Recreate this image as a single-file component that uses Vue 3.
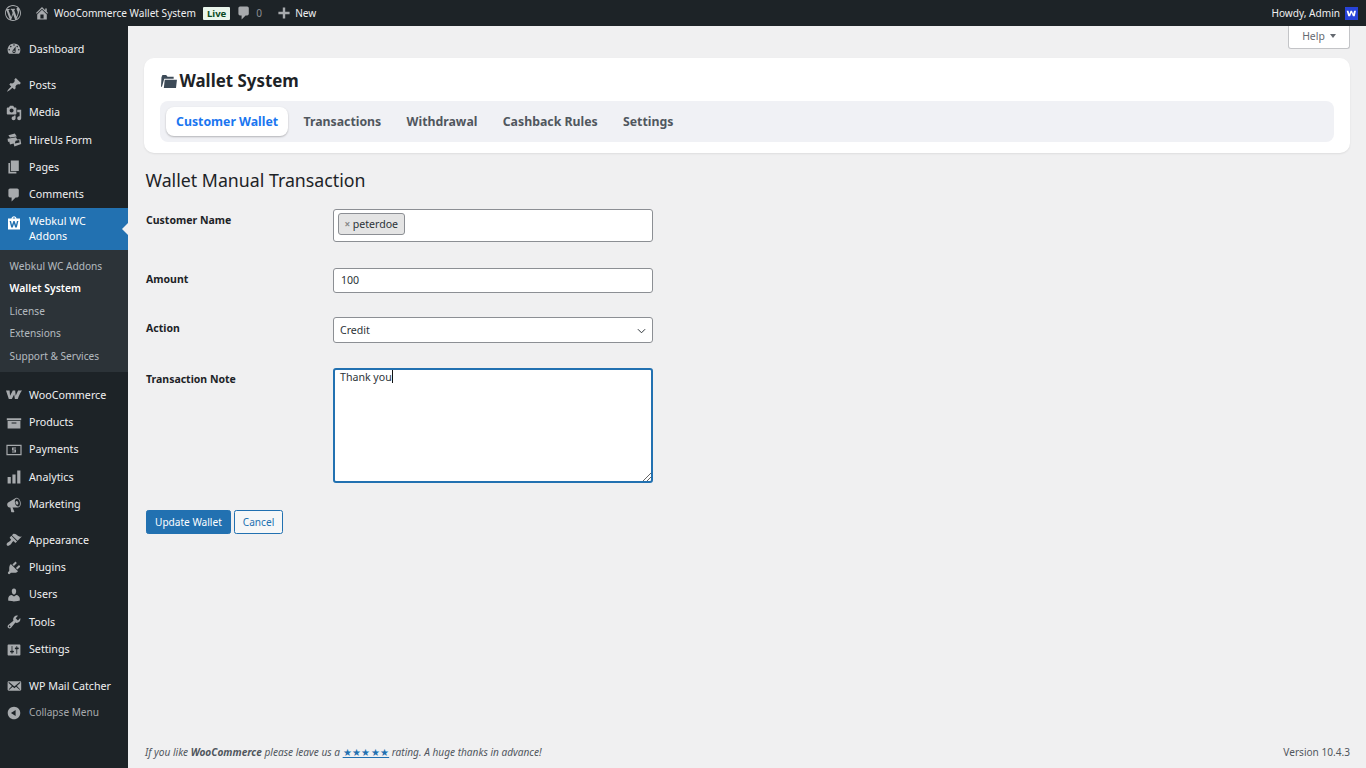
<script setup>
const P = {
  dashboard: 'M3.76 16h12.48c1.1-1.37 1.76-3.11 1.76-5 0-4.42-3.58-8-8-8s-8 3.58-8 8c0 1.89.66 3.63 1.76 5zM10 4c.55 0 1 .45 1 1s-.45 1-1 1-1-.45-1-1 .45-1 1-1zM6 6c.55 0 1 .45 1 1s-.45 1-1 1-1-.45-1-1 .45-1 1-1zm8 0c.55 0 1 .45 1 1s-.45 1-1 1-1-.45-1-1 .45-1 1-1zm-5.37 5.55L12 7v6c0 1.1-.9 2-2 2s-2-.9-2-2c0-.57.24-1.08.63-1.45zM4 10c.55 0 1 .45 1 1s-.45 1-1 1-1-.45-1-1 .45-1 1-1zm12 0c.55 0 1 .45 1 1s-.45 1-1 1-1-.45-1-1 .45-1 1-1zm-5 3c0-.55-.45-1-1-1s-1 .45-1 1 .45 1 1 1 1-.45 1-1z',
  post: 'M10.44 3.02l1.82-1.82 6.36 6.35-1.83 1.82c-1.05-.68-2.48-.57-3.41.36l-.75.75c-.92.93-1.04 2.35-.35 3.41l-1.83 1.82-2.41-2.41-2.8 2.79c-.42.42-3.38 2.71-3.8 2.29s1.86-3.39 2.28-3.81l2.79-2.79L4.1 9.36l1.83-1.82c1.05.69 2.48.57 3.4-.36l.75-.75c.93-.92 1.05-2.35.36-3.41z',
  media: 'M13 11V4c0-.55-.45-1-1-1h-1.67L9 1H5L3.67 3H2c-.55 0-1 .45-1 1v7c0 .55.45 1 1 1h10c.55 0 1-.45 1-1zM7 4.5c1.38 0 2.5 1.12 2.5 2.5S8.38 9.5 7 9.5 4.5 8.38 4.5 7 5.62 4.5 7 4.5zM14 6h5v10.5c0 1.38-1.12 2.5-2.5 2.5S14 17.88 14 16.5s1.12-2.5 2.5-2.5c.17 0 .34.02.5.05V9h-3V6zm-4 8.05V13h2v3.5c0 1.38-1.12 2.5-2.5 2.5S7 17.88 7 16.5 8.12 14 9.5 14c.17 0 .34.02.5.05z',
  form: 'M3 4l8-2 2.500 3.500L5 7zM2 8.500 12.500 6.500l1.500 3 4-.5 1 6-8.500 3-1-3.500-4.500 1-1-3.500-1.500.5zM12 11l-1 3.500 6-1.500-.5-3z',
  page: 'M6 15V2h10v13H6zm-1 1h8v2H3V5h2v11z',
  comment: 'M5 2h9c1.1 0 2 .9 2 2v7c0 1.1-.9 2-2 2h-2l-5 5v-5H5c-1.1 0-2-.9-2-2V4c0-1.1.9-2 2-2z',
  woo: 'M0 4.500h4.500l.6 6.500L8.500 4.500h3l.6 6.500 3-6.500h4.900c-1.800 1.800-3.500 6.200-5.300 10.500h-3.600l-.9-5.500L7.300 15H3.500z',
  box: 'M19 4v2.500H1V4h18zM2 7.500h16V17H2V7.500zM13 10.500V9.300H7v1.200h6z',
  pay: 'M.5 3.500h19v13H.5zM2 5v10h16V5zM7.500 6.800h5v1.400H9.200v1.100h3.300v3.900h-5v-1.400h3.300v-1.100H7.500z',
  chart: 'M18 18V2h-4v16h4zm-6 0V7H8v11h4zm-6 0v-8H2v8h4z',
  mega: 'M18.150 5.940c.46 1.620.38 3.220-.02 4.480-.42 1.280-1.260 2.180-2.300 2.480-.16.06-.26.06-.4.06-.06.02-.12.02-.18.02-.06.02-.14.02-.22.02H8.200l2.220 5.500c.02.14-.06.26-.14.34-.08.1-.24.16-.34.16H6.950c-.1 0-.26-.06-.34-.16-.08-.08-.16-.2-.14-.34l-1-5.500H4.250c-.5.06-1.080-.18-1.540-.62s-.88-1.080-1.060-1.880c-.24-.8-.2-1.560-.02-2.200.18-.62.58-1.080 1.060-1.300l9-5.400c.1-.06.18-.1.24-.16.06-.04.14-.08.24-.12.16-.08.28-.12.5-.18 1.040-.3 2.240.1 3.220 1 .98.88 1.840 2.240 2.260 3.860zm-2.580 5.980c.4-.1.74-.34 1.040-.7.58-.7.86-1.760.86-3.040-.02-.64-.1-1.300-.28-1.980-.34-1.360-1.020-2.500-1.780-3.240s-1.680-1.100-2.460-.88c-.82.22-1.400.96-1.700 2-.32 1.040-.28 2.360.06 3.720.38 1.360 1 2.500 1.800 3.240.78.74 1.620 1.100 2.480.88zM13 5c1.200-.4 2.300 1.300 2.400 2.700.1 1-.4 1.900-1 2.100-1 .3-2.200-1.100-2.500-2.500C11.600 6.200 12.200 5.200 13 5z',
  brush: 'M14.480 11.060L7.410 3.990l1.500-1.500c.5-.56 2.300-.47 3.510.32 1.210.8 1.430 1.280 2.910 2.100 1.180.64 2.450 1.260 4.450.85zm-.71.71L6.700 4.700 4.930 6.470c-.39.39-.39 1.020 0 1.410l1.060 1.060c.39.39.39 1.030 0 1.420-.6.6-1.430 1.110-2.210 1.690-.35.26-.7.53-1.010.84C1.430 13.230 0 15.490 1.260 16.740s3.510-.17 4.850-1.510c.31-.31.58-.66.85-1.020.57-.78 1.080-1.610 1.690-2.210.39-.39 1.020-.39 1.410 0l1.060 1.060c.39.39 1.020.39 1.410 0z',
  plug: 'M13.110 4.360L9.870 7.600 8 5.730l3.240-3.240c.35-.34 1.050-.2 1.560.32.52.51.66 1.210.31 1.550zm-8 1.770l.91-1.120 9.010 9.010-1.190.84c-.71.71-2.630 1.160-3.820 1.160H6.140L4.900 17.260c-.59.59-1.540.59-2.120 0-.59-.58-.59-1.530 0-2.120l1.240-1.240v-3.880c0-1.130.4-3.190 1.090-3.890zm7.260 3.970l3.240-3.240c.34-.35 1.040-.21 1.550.31.52.51.66 1.210.31 1.550l-3.240 3.250z',
  user: 'M10 9.250c-2.270 0-2.730-3.440-2.730-3.440C7 4.020 7.820 2 9.970 2c2.160 0 2.980 2.020 2.710 3.810 0 0-.41 3.440-2.680 3.440zm0 2.570L12.720 10c2.390 0 4.520 2.330 4.520 4.530v2.490s-3.650 1.130-7.240 1.130c-3.650 0-7.240-1.130-7.240-1.130v-2.490c0-2.250 1.940-4.480 4.470-4.480z',
  tool: 'M16.680 9.770c-1.340 1.340-3.300 1.670-4.950.99l-5.410 6.520c-.99.99-2.590.99-3.580 0s-.99-2.590 0-3.570l6.520-5.420c-.68-1.650-.35-3.610.99-4.950 1.280-1.280 3.120-1.620 4.720-1.060l-2.890 2.890 2.820 2.820 2.860-2.870c.53 1.580.18 3.390-1.080 4.650zM3.810 16.210c.4.39 1.040.39 1.430 0 .4-.4.4-1.040 0-1.430-.39-.4-1.030-.4-1.430 0-.39.39-.39 1.030 0 1.430z',
  sliders: 'M18 16V4c0-.55-.45-1-1-1H3c-.55 0-1 .45-1 1v12c0 .55.45 1 1 1h14c.55 0 1-.45 1-1zM8 11h1c.55 0 1 .45 1 1s-.45 1-1 1H8v1.500c0 .28-.22.5-.5.5s-.5-.22-.5-.5V13H6c-.55 0-1-.45-1-1s.45-1 1-1h1V5.500c0-.28.22-.5.5-.5s.5.22.5.5V11zm5-2h-1c-.55 0-1-.45-1-1s.45-1 1-1h1V5.500c0-.28.22-.5.5-.5s.5.22.5.5V7h1c.55 0 1 .45 1 1s-.45 1-1 1h-1v5.500c0 .28-.22.5-.5.5s-.5-.22-.5-.5V9z',
  mail: 'M19 14.500v-9c0-.83-.67-1.500-1.500-1.500H3.490c-.83 0-1.500.67-1.500 1.500v9c0 .83.67 1.500 1.500 1.500H17.500c.83 0 1.500-.67 1.500-1.500zm-1.310-9.110c.33.33.15.67-.03.84L13.600 9.950l3.900 4.060c.12.14.2.36.06.51-.13.16-.43.15-.56.05l-4.370-3.730-2.140 1.950-2.130-1.950-4.370 3.730c-.13.1-.43.11-.56-.05-.14-.15-.06-.37.06-.51l3.900-4.060-4.060-3.720c-.18-.17-.36-.51-.03-.84s.67-.17.95.07l6.240 5.040 6.250-5.040c.28-.24.62-.4.95-.07z',
  collapse: 'M10 2.160c4.330 0 7.840 3.510 7.840 7.840s-3.510 7.840-7.840 7.840S2.160 14.330 2.160 10 5.710 2.160 10 2.160zm2 11.720V6.120L6.180 9.970z',
  bag: 'M2.500 4.500h4.300C7 3 8.200 1.500 10 1.500s3 1.500 3.200 3h4.300V18h-15zM8.300 4.500h3.400C11.500 3.600 10.900 3 10 3s-1.500.6-1.700 1.500zM4.500 7.500 6.500 15.500h2L10 10.800l1.500 4.700h2l2-8h-1.800l-1.200 5-1.700-5h-1.600l-1.700 5-1.200-5z'
}
const groups = [
  [{ i: 'dashboard', t: 'Dashboard' }],
  [{ i: 'post', t: 'Posts' }, { i: 'media', t: 'Media' }, { i: 'form', t: 'HireUs Form' }, { i: 'page', t: 'Pages' }, { i: 'comment', t: 'Comments' }],
]
const group2 = [
  { i: 'woo', t: 'WooCommerce' }, { i: 'box', t: 'Products' }, { i: 'pay', t: 'Payments' }, { i: 'chart', t: 'Analytics' }, { i: 'mega', t: 'Marketing' }
]
const group3 = [
  { i: 'brush', t: 'Appearance' }, { i: 'plug', t: 'Plugins' }, { i: 'user', t: 'Users' }, { i: 'tool', t: 'Tools' }, { i: 'sliders', t: 'Settings' }
]
const subs = [
  { t: 'Webkul WC Addons' }, { t: 'Wallet System', on: true }, { t: 'License' }, { t: 'Extensions' }, { t: 'Support & Services' }
]
const tabs = ['Customer Wallet', 'Transactions', 'Withdrawal', 'Cashback Rules', 'Settings']
</script>

<template>
  <div class="page">
    <header class="bar">
      <svg class="wp" viewBox="0 0 20 20"><path d="M20 10c0-5.510-4.490-10-10-10C4.480 0 0 4.490 0 10c0 5.520 4.480 10 10 10 5.510 0 10-4.480 10-10zM7.780 15.370L4.370 6.220c.55-.02 1.170-.08 1.170-.08.5-.06.44-1.130-.06-1.110 0 0-1.450.11-2.370.11-.18 0-.37 0-.58-.01C4.120 2.690 6.870 1.110 10 1.110c2.330 0 4.450.87 6.050 2.340-.68-.11-1.650.39-1.650 1.580 0 .74.45 1.360.9 2.100.35.61.55 1.360.55 2.460 0 1.490-1.400 5-1.400 5l-3.030-8.370c.54-.02.82-.17.82-.17.5-.05.44-1.250-.06-1.220 0 0-1.440.12-2.380.12-.87 0-2.330-.12-2.330-.12-.5-.03-.56 1.200-.06 1.220l.92.08 1.260 3.410zM17.410 10c.24-.64.74-1.870.43-4.250.7 1.290 1.050 2.710 1.050 4.250 0 3.290-1.730 6.240-4.400 7.780.97-2.590 1.940-5.200 2.920-7.780zM6.100 18.090C3.120 16.650 1.110 13.530 1.110 10c0-1.300.23-2.480.72-3.590C3.250 10.300 4.670 14.200 6.100 18.090zm4.030-6.630l2.580 6.980c-.86.29-1.760.45-2.710.45-.79 0-1.570-.11-2.290-.33.81-2.380 1.620-4.740 2.420-7.100z"/></svg>
      <svg class="bi home" viewBox="0 0 20 20"><path d="M16 8.500l1.530 1.530-1.060 1.060L10 4.620l-6.470 6.470-1.060-1.060L10 2.500l4 4v-2h2v4zm-6-2.460l6 5.990V18H4v-5.970zM12 17v-5H8v5h4z"/></svg>
      <span class="site">WooCommerce Wallet System</span>
      <span class="live">Live</span>
      <svg class="bi cm" viewBox="0 0 20 20"><path :d="P.comment"/></svg>
      <span class="zero">0</span>
      <svg class="bi plus" viewBox="0 0 20 20"><path d="M17 8.500v3h-5.500V17h-3v-5.500H3v-3h5.500V3h3v5.500z"/></svg>
      <span class="new">New</span>
      <span class="howdy">Howdy, Admin</span>
      <span class="avatar"><svg viewBox="0 0 12 12"><path d="M1.500 3.500h1.700l.8 3 1.100-3h1.400l1 3 .9-3h1.700L9 8.500H7.300L6 5.300 4.700 8.500H3z"/></svg></span>
    </header>
    <div class="body">
      <aside class="side">
        <nav class="group">
          <a v-for="m in groups[0]" :key="m.t" class="item"><svg viewBox="0 0 20 20"><path :d="P[m.i]"/></svg><span>{{ m.t }}</span></a>
        </nav>
        <nav class="group">
          <a v-for="m in groups[1]" :key="m.t" class="item"><svg viewBox="0 0 20 20"><path fill-rule="evenodd" :d="P[m.i]"/></svg><span>{{ m.t }}</span></a>
          <a class="item active"><svg viewBox="0 0 20 20"><path fill-rule="evenodd" :d="P.bag"/></svg><span>Webkul WC Addons</span></a>
          <ul class="subs">
            <li v-for="s in subs" :key="s.t" :class="{ on: s.on }">{{ s.t }}</li>
          </ul>
        </nav>
        <nav class="group g2">
          <a v-for="m in group2" :key="m.t" class="item"><svg viewBox="0 0 20 20"><path fill-rule="evenodd" :d="P[m.i]"/></svg><span>{{ m.t }}</span></a>
        </nav>
        <nav class="group g3">
          <a v-for="m in group3" :key="m.t" class="item"><svg viewBox="0 0 20 20"><path :d="P[m.i]"/></svg><span>{{ m.t }}</span></a>
        </nav>
        <nav class="group g4">
          <a class="item"><svg viewBox="0 0 20 20"><path :d="P.mail"/></svg><span>WP Mail Catcher</span></a>
          <a class="item collapse"><svg viewBox="0 0 20 20"><path :d="P.collapse"/></svg><span>Collapse Menu</span></a>
        </nav>
      </aside>
      <main class="main">
        <div class="helprow"><button class="help">Help <i class="tri"></i></button></div>
        <section class="card">
          <h1>
            <svg class="folder" viewBox="0 0 18 16"><path d="M1.500 3.500 2.500 1h4l1.500 2h6.500v2H4.500L2 13.500H1zM4 15l1-9h13l-1 9z"/></svg>
            Wallet System
          </h1>
          <div class="tabs">
            <span v-for="(t, n) in tabs" :key="t" class="tab" :class="{ sel: n === 0 }">{{ t }}</span>
          </div>
        </section>
        <h2>Wallet Manual Transaction</h2>
        <form class="form" @submit.prevent>
          <div class="row r1">
            <label>Customer Name</label>
            <div class="multi"><span class="chip"><b>×</b>peterdoe</span></div>
          </div>
          <div class="row r2">
            <label>Amount</label>
            <div class="field">100</div>
          </div>
          <div class="row r3">
            <label>Action</label>
            <div class="field sel">Credit
              <svg viewBox="0 0 10 6"><path d="M1 1l4 4 4-4" fill="none" stroke="#2c3338" stroke-width="1.100"/></svg>
            </div>
          </div>
          <div class="row r4">
            <label>Transaction Note</label>
            <div class="note">Thank you<i class="caret"></i>
              <svg class="grip" viewBox="0 0 8 8"><path d="M0 8 8 0M4 8l4-4" stroke="#555" stroke-width=".9" fill="none"/></svg>
            </div>
          </div>
          <div class="btns">
            <button class="primary">Update Wallet</button>
            <button class="secondary">Cancel</button>
          </div>
        </form>
        <footer class="foot">
          <span class="thanks">If you like <b>WooCommerce</b> please leave us a <a>★★★★★</a> rating. A huge thanks in advance!</span>
          <span class="ver">Version 10.4.3</span>
        </footer>
      </main>
    </div>
  </div>
</template>

<style>
html, body { margin: 0; background: #f0f0f1; }
</style>
<style scoped>
.page { width: 1366px; height: 768px; overflow: hidden; display: flex; flex-direction: column; font-family: "Noto Sans", "Open Sans", sans-serif; color: #3c434a; background: #f0f0f1; }
.bar { height: 26px; flex: none; background: #1d2327; color: #f0f0f1; display: flex; align-items: center; font-size: 10.100px; padding: 0 8px 0 5px; box-sizing: border-box; }
.bar svg { fill: #a7aaad; display: block; }
.wp { width: 16px; height: 16px; }
.bi { width: 16px; height: 16px; }
.home { margin-left: 13px; }
.site { margin-left: 4px; }
.live { margin-left: 7px; background: #e9f5ec; color: #0a4b1f; font-weight: 700; font-size: 9.600px; padding: 0 4px; line-height: 13px; height: 13px; border-radius: 1px; }
.cm { margin-left: 6px; }
.zero { margin-left: 4px; color: #8c8f94; }
.plus { margin-left: 14px; }
.new { margin-left: 3px; }
.howdy { margin-left: auto; }
.avatar { width: 13px; height: 13px; margin-left: 5px; background: #2743d8; display: flex; align-items: center; justify-content: center; }
.avatar svg { width: 13px; height: 13px; fill: #fff; }
.body { flex: 1; min-height: 0; display: flex; }
.side { width: 128px; flex: none; background: #1d2327; color: #f0f0f1; font-size: 10.700px; box-sizing: border-box; padding-top: 9.600px; }
.group { margin-bottom: 8.900px; }
.g2 { margin-top: 9.400px; margin-bottom: 8.500px; }
.g3 { margin-bottom: 9.500px; }
.g4 { margin-top: 9.500px; }
.item { display: flex; align-items: center; min-height: 27.300px; position: relative; }
.item svg { width: 16px; height: 16px; margin-left: 6px; fill: #a7aaad; flex: none; }
.item span { margin-left: 7px; line-height: 15px; }
.item.active { background: #2271b1; color: #fff; min-height: 42px; }
.item.active span { max-width: 75px; }
.item.active svg { fill: #fff; margin-top: -12px; }
.item.active::after { content: ""; position: absolute; right: 0; top: 50%; margin-top: -6.400px; border: 6.400px solid transparent; border-right-color: #f0f0f1; border-left: 0; }
.collapse { color: #a7aaad; font-size: 10.100px; margin-top: -1px; }
.subs { list-style: none; margin: 0; padding: 5px 0 5px; background: #2c3338; font-size: 10.150px; color: rgba(240, 246, 252, .7); }
.subs li { padding-left: 9.600px; line-height: 22.400px; }
.subs li.on { color: #fff; font-weight: 600; font-size: 10.400px; margin: -.5px 0 .5px; }
.main { flex: 1; min-width: 0; display: flex; flex-direction: column; padding: 0 16px; box-sizing: border-box; }
.helprow { display: flex; justify-content: flex-end; height: 23px; }
.help { width: 62px; height: 23px; box-sizing: border-box; background: #fff; border: 1px solid #c3c4c7; border-top: 0; border-radius: 0 0 3px 3px; font: 10.400px "Noto Sans", sans-serif; color: #646970; padding: 0 0 2px; display: flex; align-items: center; justify-content: center; gap: 5px; }
.tri { border: 3.500px solid transparent; border-top: 4.500px solid #646970; border-bottom: 0; }
.card { margin-top: 9px; background: #fff; border-radius: 10px; box-shadow: 0 1px 2px rgba(0,0,0,.08); padding: 11px 16px 0; height: 95px; box-sizing: border-box; }
.card h1 { margin: 0; display: flex; align-items: center; gap: 3px; font-size: 16.900px; font-weight: 700; color: #1d2327; line-height: 24px; }
.folder { width: 17px; height: 15px; fill: #3c4a57; margin-left: -.5px; }
.tabs { margin-top: 8px; height: 41px; background: #f0f1f5; border-radius: 8px; display: flex; align-items: center; padding: 0 6px; gap: 5.300px; box-sizing: border-box; }
.tab { font-weight: 700; font-size: 12.300px; color: #50575e; padding: 0 10px; line-height: 29px; border-radius: 8px; }
.tab.sel { color: #1a76f0; background: #fff; box-shadow: 0 1px 2px rgba(0,0,0,.25); }
h2 { margin: 16px 0 0 1.500px; font-size: 17.760px; font-weight: 400; color: #1d2327; line-height: 23px; }
.form { margin: 17px 0 0 2px; font-size: 10.600px; }
.row { display: grid; grid-template-columns: 187px 320px; align-items: start; }
.row label { font-weight: 700; color: #1d2327; line-height: 14px; padding-top: 4px; font-size: 10.500px; }
.multi, .field, .note { box-sizing: border-box; background: #fff; border: 1px solid #8c8f94; border-radius: 3px; color: #2c3338; }
.multi { height: 33px; padding: 3px 4px; }
.chip { display: inline-flex; align-items: center; height: 22px; box-sizing: border-box; background: #e4e4e4; border: 1px solid #8c8f94; border-radius: 3px; padding: 0 5.500px; }
.chip b { color: #888; font-size: 10px; margin-right: 2.500px; }
.field { height: 25px; padding: 0 6px; line-height: 22px; }
.r2 .field { padding-left: 7px; }
.field.sel { height: 26px; line-height: 24px; position: relative; }
.field.sel svg { position: absolute; right: 6px; top: 10px; width: 9px; height: 6px; }
.note { height: 115px; border: 2px solid #2271b1; padding: 0 5px; line-height: 14px; position: relative; }
.caret { display: inline-block; width: 1px; height: 13px; background: #111; vertical-align: -2px; }
.grip { position: absolute; right: 0; bottom: 0; width: 8px; height: 8px; }
.r2 { margin-top: 26px; }
.r3 { margin-top: 24px; }
.r4 { margin-top: 25px; }
.btns { margin-top: 27px; display: flex; gap: 3px; }
.btns button { height: 24px; box-sizing: border-box; border-radius: 2.400px; font: 10.100px "Noto Sans", sans-serif; padding: 0 8px; }
.primary { background: #2271b1; border: 1px solid #2271b1; color: #fff; }
.secondary { background: #f6f7f7; border: 1px solid #2271b1; color: #2271b1; }
.foot { margin-top: auto; height: 32px; display: flex; justify-content: space-between; align-items: center; font-size: 10.100px; color: #50575e; padding-left: 1px; }
.thanks { font-style: italic; }
.thanks a { color: #2271b1; text-decoration: underline; font-style: normal; letter-spacing: .3px; }
</style>
